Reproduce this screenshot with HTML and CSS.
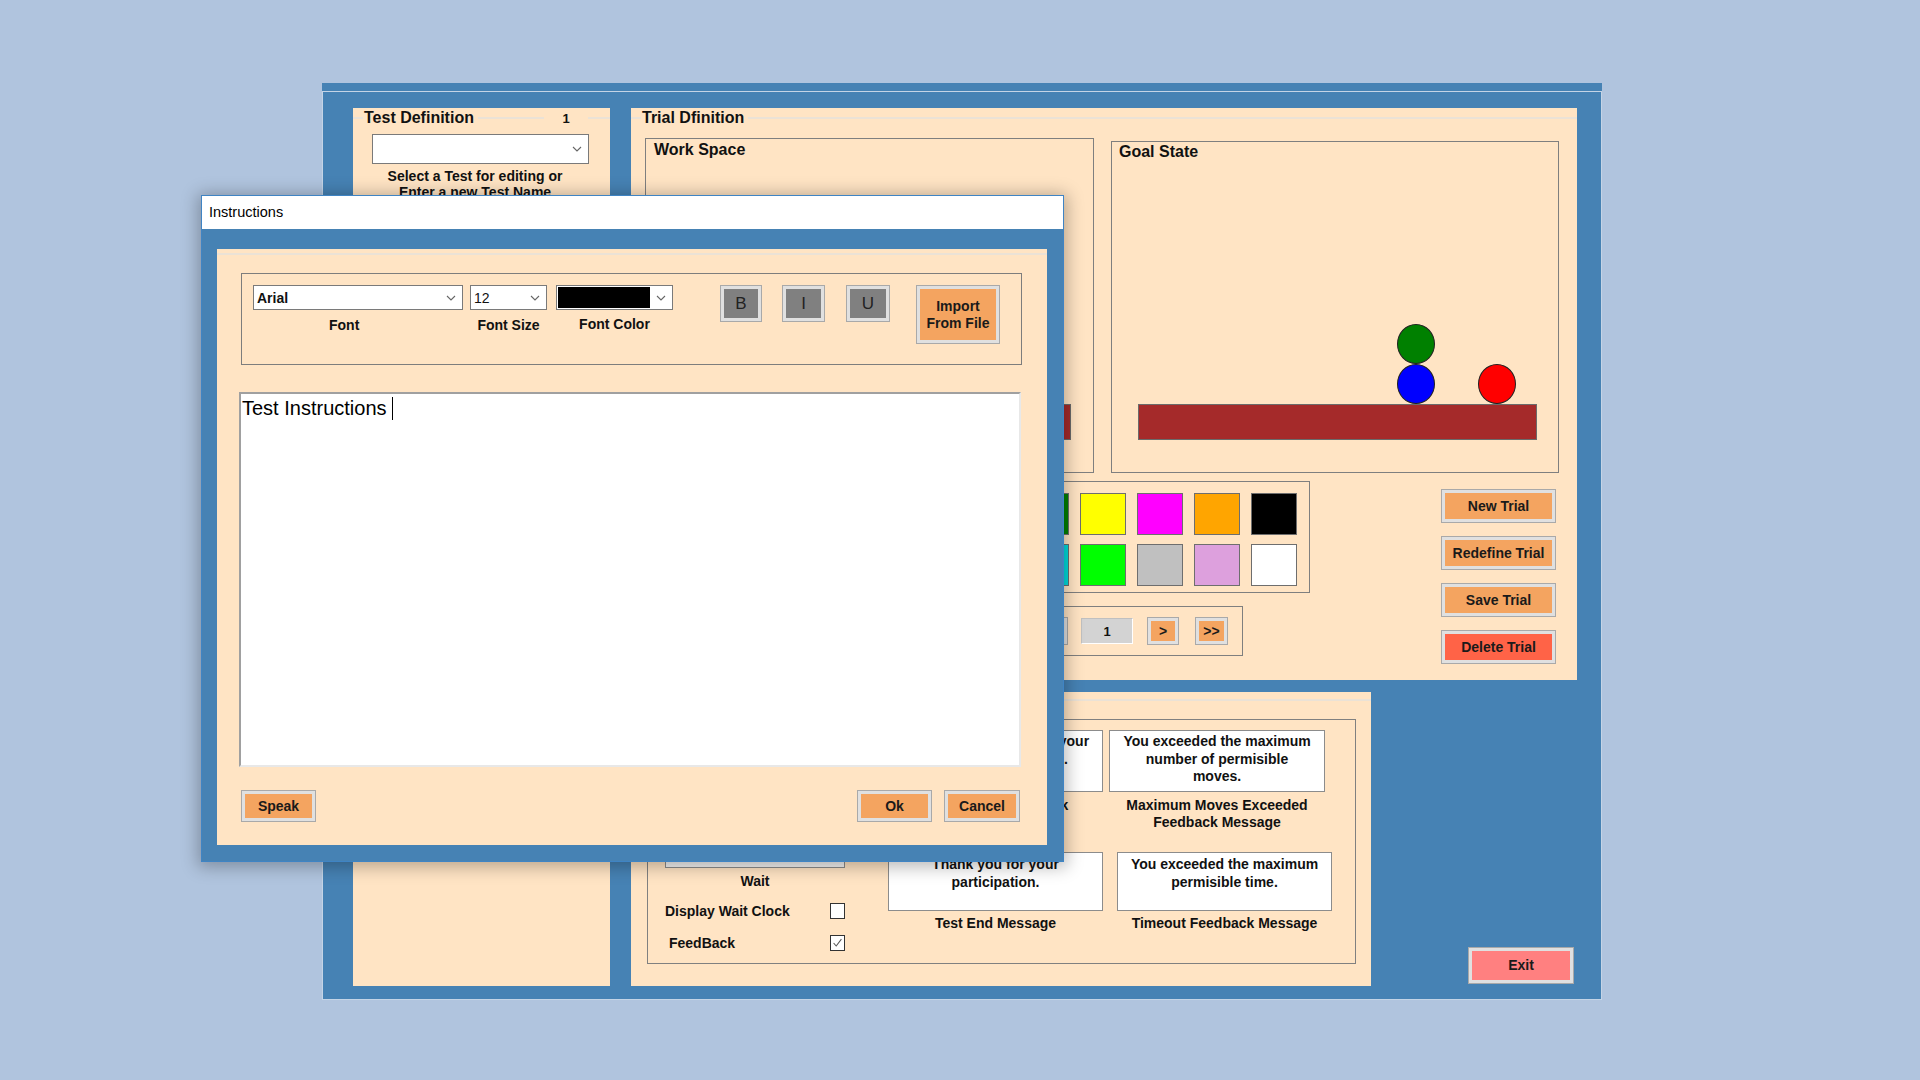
FILE: index.html
```html
<!DOCTYPE html>
<html lang="en">
<head>
<meta charset="utf-8">
<title>Instructions</title>
<link rel="stylesheet" href="styles.css">
</head>
<body>
<div class="mainwin">
  <div class="strip"></div>
  <div class="mainbody">
    <section class="panel tdef">
      <div class="gbhead"><span class="ln lead"></span><span class="gbtitle">Test Definition</span><span class="ln"></span><span class="num">1</span><span class="ln tail"></span></div>
      <div class="combo testcombo"><span class="cval"></span><svg class="chev" viewBox="0 0 10 6"><polyline points="1,1 5,5 9,1" fill="none" stroke="#666" stroke-width="1.1"/></svg></div>
      <p class="hint">Select a Test for editing or<br>Enter a new Test Name</p>
    </section>

    <div class="rightcol">
      <section class="panel trial">
        <div class="gbhead"><span class="ln lead"></span><span class="gbtitle">Trial Dfinition</span><span class="ln"></span></div>
        <div class="boards">
          <div class="board work">
            <div class="btitle">Work Space</div>
            <span class="ball red" style="left:60px;top:225px"></span>
            <span class="ball blue" style="left:140px;top:225px"></span>
            <span class="ball green" style="left:140px;top:185px"></span>
            <span class="bar"></span>
          </div>
          <div class="board goal">
            <div class="btitle">Goal State</div>
            <span class="ball green" style="left:285px;top:182px"></span>
            <span class="ball blue" style="left:285px;top:222px"></span>
            <span class="ball red" style="left:366px;top:222px"></span>
            <span class="bar"></span>
          </div>
        </div>
        <div class="tools">
          <div class="toolleft">
            <div class="palette">
              <span class="sw" style="background:#ff0000"></span>
              <span class="sw" style="background:#0000ff"></span>
              <span class="sw" style="background:#008000"></span>
              <span class="sw" style="background:#ffff00"></span>
              <span class="sw" style="background:#ff00ff"></span>
              <span class="sw" style="background:#ffa500"></span>
              <span class="sw" style="background:#000000"></span>
              <span class="sw" style="background:#a52a2a"></span>
              <span class="sw" style="background:#800080"></span>
              <span class="sw" style="background:#00dcdc"></span>
              <span class="sw" style="background:#00ff00"></span>
              <span class="sw" style="background:#c0c0c0"></span>
              <span class="sw" style="background:#dda0dd"></span>
              <span class="sw" style="background:#ffffff"></span>
            </div>
            <div class="nav">
              <button class="btn navbtn">&lt;&lt;</button>
              <button class="btn navbtn prev">&lt;</button>
              <span class="navfield">1</span>
              <button class="btn navbtn next">&gt;</button>
              <button class="btn navbtn last">&gt;&gt;</button>
            </div>
          </div>
          <div class="actions">
            <button class="btn act">New Trial</button>
            <button class="btn act">Redefine Trial</button>
            <button class="btn act">Save Trial</button>
            <button class="btn act del">Delete Trial</button>
          </div>
        </div>
      </section>

      <div class="lowrow">
        <section class="panel msgs">
          <div class="gbhead plain"><span class="ln"></span></div>
          <div class="msgbox">
            <div class="lcol">
              <span class="tb">50</span>
              <span class="tblabel">Maximum Moves</span>
              <span class="tb tb2">120</span>
              <span class="tblabel">Time Limit</span>
              <span class="tb tbwait"></span>
              <span class="tblabel waitlbl">Wait</span>
              <div class="chkrow first"><span class="chklbl">Display Wait Clock</span><span class="chk"></span></div>
              <div class="chkrow second"><span class="chklbl fb">FeedBack</span><span class="chk"><svg viewBox="0 0 15 15"><polyline points="3,7.5 6,11 12,3" fill="none" stroke="#555" stroke-width="1.2"/></svg></span></div>
            </div>
            <div class="mgrid">
              <div class="mcell">
                <div class="mtext r1">You finished the test in your<br>least possible moves.</div>
                <div class="mlabel">Completion Feedback<br>Message</div>
              </div>
              <div class="mcell">
                <div class="mtext r1">You exceeded the maximum<br>number of permisible<br>moves.</div>
                <div class="mlabel">Maximum Moves Exceeded<br>Feedback Message</div>
              </div>
              <div class="mcell row2">
                <div class="mtext r2">Thank you for your<br>participation.</div>
                <div class="mlabel l2">Test End Message</div>
              </div>
              <div class="mcell row2 shift">
                <div class="mtext r2">You exceeded the maximum<br>permisible time.</div>
                <div class="mlabel l2">Timeout Feedback Message</div>
              </div>
            </div>
          </div>
        </section>
        <button class="btn exit">Exit</button>
      </div>
    </div>
  </div>
</div>

<div class="dlg">
  <div class="dtitle">Instructions</div>
  <div class="dbody">
    <div class="dpanel">
      <div class="dline"></div>
      <div class="toolbar">
        <div class="fgrp fontgrp">
          <div class="combo dcombo"><span class="cval bold">Arial</span><svg class="chev" viewBox="0 0 10 6"><polyline points="1,1 5,5 9,1" fill="none" stroke="#666" stroke-width="1.1"/></svg></div>
          <div class="flabel fontlbl">Font</div>
        </div>
        <div class="fgrp sizegrp">
          <div class="combo dcombo"><span class="cval">12</span><svg class="chev" viewBox="0 0 10 6"><polyline points="1,1 5,5 9,1" fill="none" stroke="#666" stroke-width="1.1"/></svg></div>
          <div class="flabel">Font Size</div>
        </div>
        <div class="fgrp colorgrp">
          <div class="combo dcombo colorcombo"><span class="colorfill"></span><svg class="chev" viewBox="0 0 10 6"><polyline points="1,1 5,5 9,1" fill="none" stroke="#666" stroke-width="1.1"/></svg></div>
          <div class="flabel clbl">Font Color</div>
        </div>
        <button class="btn fmt fb1">B</button>
        <button class="btn fmt fb2">I</button>
        <button class="btn fmt fb3">U</button>
        <button class="btn import">Import<br>From File</button>
      </div>
      <div class="editor">Test Instructions<span class="caret"></span></div>
      <div class="dbuttons">
        <button class="btn dbtn">Speak</button>
        <button class="btn dbtn ok">Ok</button>
        <button class="btn dbtn cancel">Cancel</button>
      </div>
    </div>
  </div>
</div>
</body>
</html>
```

FILE: styles.css
```css
* { box-sizing: border-box; }
html, body { margin: 0; padding: 0; }
body {
  width: 1920px;
  height: 1080px;
  background: #b0c4de;
  font-family: "Liberation Sans", Arial, sans-serif;
  color: #111;
  overflow: hidden;
  position: relative;
}

/* ---------- main window ---------- */
.mainwin {
  position: absolute;
  left: 322px;
  top: 83px;
  width: 1280px;
  height: 917px;
  display: flex;
  flex-direction: column;
}
.strip { height: 8px; background: #4682b4; flex: none; }
.mainbody {
  flex: 1;
  background: #4682b4;
  border: 1px solid #c4d4e6;
  display: flex;
  gap: 21px;
  padding: 16px 24px 13px 30px;
}
.panel { background: #ffe4c4; }

.gbhead { display: flex; align-items: center; height: 20px; }
.ln { height: 2px; background: #ebe2d6; flex: 1; }
.ln.lead { flex: none; width: 10px; }
.ln.tail { flex: none; width: 22px; }
.gbtitle { font-size: 16px; font-weight: bold; line-height: 20px; padding: 0 4px 0 1px; }
.num { width: 44px; text-align: center; font-size: 13px; font-weight: bold; }
.gbhead.plain { height: 16px; }

.tdef { width: 257px; flex: none; }
.combo {
  display: flex;
  align-items: center;
  background: #fff;
  border: 1px solid #7a7a7a;
  padding-left: 3px;
}
.chev { width: 10px; height: 6px; margin-left: auto; margin-right: 6px; flex: none; }
.testcombo { margin: 6px 0 0 19px; width: 217px; height: 30px; }
.hint {
  margin: 4px 0 0;
  padding-right: 13px;
  text-align: center;
  font-size: 14px;
  font-weight: bold;
  line-height: 16px;
}

.rightcol { width: 946px; flex: none; display: flex; flex-direction: column; gap: 12px; }
.trial { height: 572px; flex: none; }

.boards { display: flex; align-items: flex-end; gap: 17px; margin-top: 10px; padding-left: 14px; }
.board { position: relative; border: 1px solid #7f7f7f; }
.board.work { width: 449px; height: 335px; }
.board.goal { width: 448px; height: 332px; }
.btitle { font-size: 16px; font-weight: bold; line-height: 20px; padding: 1px 0 0 8px; }
.goal .btitle { padding: 0 0 0 7px; }
.ball {
  position: absolute;
  width: 38px;
  height: 40px;
  border-radius: 50%;
  border: 1px solid #222;
}
.ball.green { background: #008000; }
.ball.blue { background: #0000ff; }
.ball.red { background: #ff0000; }
.bar {
  position: absolute;
  left: 26px;
  top: 262px;
  width: 399px;
  height: 36px;
  background: #a52a2a;
  border: 1px solid #6b6b6b;
}
.work .bar { top: 265px; }

.tools { display: flex; margin-top: 8px; padding-left: 211px; padding-right: 21px; }
.toolleft { width: 468px; display: flex; flex-direction: column; }
.palette {
  align-self: flex-end;
  width: 411px;
  height: 112px;
  border: 1px solid #7f7f7f;
  display: grid;
  grid-template-columns: repeat(7, 46px);
  grid-template-rows: 42px 42px;
  column-gap: 11px;
  row-gap: 9px;
  padding: 11px 0 0 9px;
}
.sw { border: 1px solid #6e6e6e; }
.nav {
  margin-top: 13px;
  width: 401px;
  height: 50px;
  border: 1px solid #7f7f7f;
  display: flex;
  align-items: center;
  justify-content: flex-end;
  padding-right: 14px;
}
.navbtn { width: 33px; height: 28px; font-size: 13px; }
.navbtn.prev { width: 32px; margin-left: 16px; }
.navfield {
  width: 52px;
  height: 26px;
  margin-left: 13px;
  background: #d3d3d3;
  border: 1px solid;
  border-color: #c0c0c0 #ffffff #ffffff #c0c0c0;
  display: flex;
  align-items: center;
  justify-content: center;
  font-size: 13px;
  font-weight: bold;
}
.navbtn.next { width: 32px; margin-left: 14px; }
.navbtn.last { margin-left: 16px; }

.actions { margin-left: auto; margin-top: 8px; width: 115px; display: flex; flex-direction: column; gap: 13px; }
.act { height: 34px; width: 115px; }
.act.del { background: #ff6347; }

.btn {
  font-family: "Liberation Sans", Arial, sans-serif;
  font-size: 14px;
  font-weight: bold;
  color: #1a1a1a;
  background: #f4a460;
  border: 1px solid #a9a9a9;
  box-shadow: inset 0 0 0 3px #e0e0e0;
  padding: 0;
  display: flex;
  align-items: center;
  justify-content: center;
  text-align: center;
  line-height: 17px;
}

.lowrow { display: flex; align-items: flex-end; height: 294px; }
.msgs { width: 740px; height: 294px; flex: none; }
.exit {
  margin: 0 3px 2px auto;
  width: 106px;
  height: 37px;
  background: #ff8080;
}
.msgbox {
  margin: 11px 0 0 16px;
  width: 709px;
  height: 245px;
  border: 1px solid #808080;
  display: flex;
  padding-left: 17px;
}
.lcol { width: 180px; display: flex; flex-direction: column; padding-top: 11px; }
.tb {
  height: 25px;
  background: #fff;
  border: 1px solid #8c8c8c;
  font-size: 14px;
  padding: 3px 4px;
}
.tb2 { margin-top: 9px; }
.tbwait { margin-top: 19px; background: #f3f3f3; }
.tblabel { text-align: center; font-size: 14px; font-weight: bold; line-height: 17px; }
.waitlbl { margin-top: 5px; }
.chkrow { display: flex; align-items: center; height: 20px; }
.chkrow.first { margin-top: 11px; }
.chkrow.second { margin-top: 12px; }
.chklbl { font-size: 14px; font-weight: bold; }
.chklbl.fb { padding-left: 4px; }
.chk {
  margin-left: auto;
  width: 15px;
  height: 16px;
  background: #fff;
  border: 1px solid #333;
  display: flex;
}
.chk svg { width: 13px; height: 14px; }

.mgrid {
  margin-left: 43px;
  padding-top: 10px;
  display: grid;
  grid-template-columns: 215px 216px;
  column-gap: 6px;
  align-content: start;
}
.mtext {
  background: #fff;
  border: 1px solid #8c8c8c;
  text-align: center;
  font-size: 14px;
  font-weight: bold;
  line-height: 17.5px;
}
.mtext.r1 { height: 62px; padding-top: 2px; }
.mtext.r2 { height: 59px; padding-top: 3px; }
.mlabel { margin-top: 5px; text-align: center; font-size: 14px; font-weight: bold; line-height: 17px; }
.mlabel.l2 { margin-top: 4px; }
.mcell.row2 { margin-top: 21px; }
.mcell.shift { margin-left: 8px; width: 215px; }

/* ---------- dialog ---------- */
.dlg {
  position: absolute;
  left: 201px;
  top: 195px;
  width: 863px;
  height: 667px;
  border: 1px solid #3f84c4;
  background: #4682b4;
  display: flex;
  flex-direction: column;
  box-shadow: 0 2px 16px 3px rgba(0, 0, 0, 0.28);
}
.dtitle {
  height: 33px;
  flex: none;
  background: #fff;
  font-size: 14.5px;
  line-height: 33px;
  padding-left: 7px;
  color: #000;
}
.dbody { flex: 1; display: flex; padding: 20px 16px 16px 15px; }
.dpanel { flex: 1; background: #ffe4c4; display: flex; flex-direction: column; }
.dline { margin-top: 4px; height: 2px; background: #ebe2d6; }
.toolbar {
  margin: 18px 25px 0 24px;
  height: 92px;
  border: 1px solid #7d7d7d;
  display: flex;
  align-items: flex-start;
  padding: 11px 0 0 11px;
}
.fgrp { display: flex; flex-direction: column; }
.fontgrp { width: 210px; }
.sizegrp { width: 77px; margin-left: 7px; }
.colorgrp { width: 117px; margin-left: 9px; }
.dcombo { height: 25px; font-size: 14px; }
.cval.bold { font-weight: bold; }
.colorcombo { padding: 1px 0 1px 1px; }
.colorfill { width: 92px; height: 21px; background: #000; }
.flabel { margin-top: 7px; font-size: 14px; font-weight: bold; line-height: 17px; text-align: center; }
.flabel.fontlbl { text-align: left; padding-left: 76px; }
.flabel.clbl { margin-top: 6px; }
.fmt {
  height: 37px;
  background: #808080;
  font-weight: normal;
  font-size: 17px;
  color: #222;
}
.fb1 { width: 42px; margin-left: 47px; }
.fb2 { width: 43px; margin-left: 20px; }
.fb3 { width: 44px; margin-left: 21px; }
.import { width: 84px; height: 59px; margin-left: 26px; }

.editor {
  margin: 27px 0 0 22px;
  width: 782px;
  height: 375px;
  flex: none;
  background: #fff;
  border: 2px solid;
  border-color: #a0a0a0 #e8e8e8 #e8e8e8 #a0a0a0;
  padding: 3px 1px;
  font-family: "Liberation Sans", Arial, sans-serif;
  font-size: 20px;
  line-height: 23px;
  color: #000;
}
.caret {
  display: inline-block;
  width: 1px;
  height: 23px;
  margin-left: 5px;
  background: #000;
  vertical-align: top;
}
.dbuttons { margin-top: 23px; height: 32px; display: flex; padding: 0 27px 0 24px; }
.dbtn { height: 32px; width: 75px; }
.dbtn.ok { margin-left: auto; }
.dbtn.cancel { margin-left: 12px; width: 76px; }
```
